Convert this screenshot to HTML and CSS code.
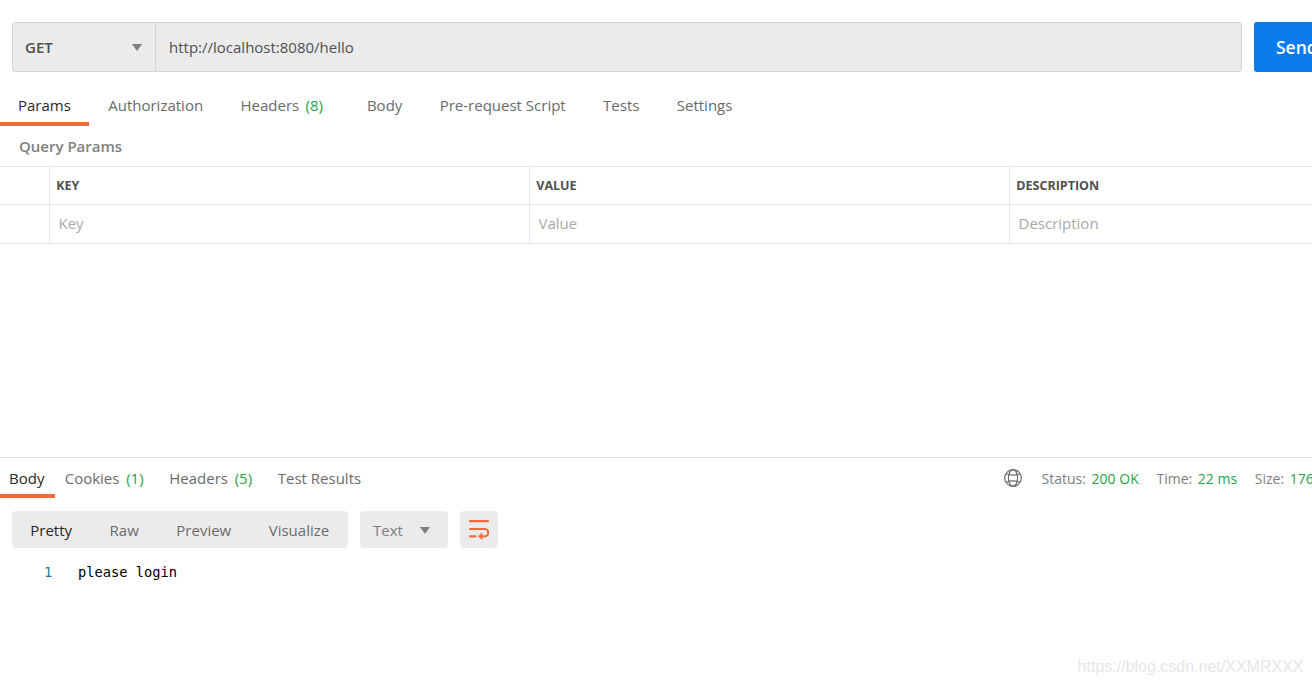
FILE: index.html
```html
<!DOCTYPE html>
<html>
	<head>
		<meta charset="utf-8">
		<title>Request</title>
		<link rel="stylesheet" href="styles.css">
	</head>
	<body>
		<div class="request">
			<div class="urlBar">
				<div class="method">GET <svg class="caret" width="10" height="7"><path d="M0 0h10L5 7z"/></svg></div>
				<div class="url">http://localhost:8080/hello</div>
			</div>
			<div class="send">Send</div>
		</div>
		<div class="tabs">
			<div class="tab active">Params</div>
			<div class="tab">Authorization</div>
			<div class="tab">Headers <span class="count">(8)</span></div>
			<div class="tab">Body</div>
			<div class="tab">Pre-request Script</div>
			<div class="tab">Tests</div>
			<div class="tab">Settings</div>
		</div>
		<div class="title">Query Params</div>
		<div class="params">
			<div class="cell head"></div>
			<div class="cell head">KEY</div>
			<div class="cell head">VALUE</div>
			<div class="cell head">DESCRIPTION</div>
			<div class="cell"></div>
			<div class="cell">Key</div>
			<div class="cell">Value</div>
			<div class="cell">Description</div>
		</div>
		<div class="response">
			<div class="responseBar">
				<div class="responseTabs">
					<div class="resTab active">Body</div>
					<div class="resTab">Cookies <span class="count">(1)</span></div>
					<div class="resTab">Headers <span class="count">(5)</span></div>
					<div class="resTab">Test Results</div>
				</div>
				<div class="meta">
					<svg class="globe" width="18" height="18" viewBox="0 0 18 18"><circle cx="9" cy="9" r="8.3"/><ellipse cx="9" cy="9" rx="4.6" ry="8.3"/><path d="M2 4.8Q9 7.6 16 4.8M2 13.2Q9 10.4 16 13.2"/></svg>
					<span class="stat">Status: <b>200 OK</b></span>
					<span class="stat">Time: <b>22 ms</b></span>
					<span class="stat">Size: <b>176 B</b></span>
				</div>
			</div>
			<div class="toolbar">
				<div class="views">
					<span class="view active">Pretty</span>
					<span class="view">Raw</span>
					<span class="view">Preview</span>
					<span class="view">Visualize</span>
				</div>
				<div class="format">Text <svg class="caret" width="10" height="7"><path d="M0 0h10L5 7z"/></svg></div>
				<div class="wrap">
					<svg width="20" height="20" viewBox="0 0 20 20"><path class="wrapLine" d="M1 1.2h18M1 9h14.6a3.6 3.6 0 0 1 0 7.3H12M1 16.3h5.4"/><path class="wrapArrow" d="M9 16.3l4.2-3.7v7.4z"/></svg>
				</div>
			</div>
			<div class="code"><span class="line">1</span><span>please login</span></div>
		</div>
		<div class="watermark">https://blog.csdn.net/XXMRXXX</div>
	</body>
</html>
```
FILE: styles.css
```css
*{ box-sizing: border-box; }
body{ margin: 0; padding-top: 22px; width: 1312px; height: 684px; overflow: hidden; display: flex; flex-direction: column; background: #fff; color: #6b6b6b; font: 15px/20px "Open Sans", sans-serif; white-space: nowrap; }
.request{ display: flex; height: 50px; flex: none; padding-left: 12px; }
.urlBar{ display: flex; flex: none; width: 1230px; background: #ebebeb; border: 1px solid #d4d4d4; border-radius: 3px; line-height: 48px; color: #505050; }
.method{ display: flex; align-items: center; justify-content: space-between; width: 143px; padding: 0 13px 0 12px; border-right: 1px solid #d4d4d4; font-size: 15px; font-weight: 600; }
.url{ padding-left: 13px; }
.caret{ fill: #808080; }
.send{ flex: none; width: 100px; margin-left: 12px; padding-left: 22px; background: #097bed; border-radius: 3px; color: #fff; font-size: 17.5px; font-weight: 600; line-height: 50px; }
.tabs{ display: flex; flex: none; height: 54px; }
.tab{ padding: 23px 18.7px 0 18.7px; }
.tab.active{ padding: 23px 18px 0 18px; margin-right: 0.7px; border-bottom: 4px solid #f26b3a; }
.active{ color: #282828; }
.count{ margin: 0 6.5px 0 2.5px; color: #26a248; }
.title{ flex: none; height: 40px; padding: 10px 0 0 19px; color: #808080; font-weight: 600; }
.params{ display: grid; flex: none; grid-template-columns: 50px 480px 480px 302px; grid-template-rows: 38px 39px; border-top: 1px solid #e6e6e6; }
.cell{ padding: 8px 0 0 8.5px; border-right: 1px solid #e6e6e6; border-bottom: 1px solid #e6e6e6; color: #a9a9a9; }
.cell:nth-child(4n){ border-right: 0; }
.cell.head{ padding: 9px 0 0 6.3px; color: #505050; font-size: 12.5px; font-weight: 700; }
.response{ flex: none; margin-top: 213px; border-top: 1px solid #dcdcdc; }
.responseBar{ display: flex; height: 40px; }
.responseTabs{ display: flex; flex: none; width: 1004px; }
.resTab{ padding: 10px 16px 0 9.7px; }
.resTab.active{ padding: 10px 10.6px 0 9px; border-bottom: 4px solid #f26b3a; }
.resTab .count{ margin: 0 0 0 2.8px; }
.meta{ display: flex; flex: none; padding-top: 11px; font-size: 14px; color: #808080; }
.globe{ width: 18px; margin-right: 19.6px; fill: none; stroke: #6b6b6b; stroke-width: 1.2; }
.stat{ margin-right: 17.7px; }
.stat b{ margin-left: 2px; color: #26a248; font-weight: 400; }
.toolbar{ display: flex; height: 37px; margin: 13px 0 0 12px; gap: 12px; line-height: 38px; }
.views, .format, .wrap{ display: flex; background: #ebebeb; border-radius: 4px; }
.views{ width: 336px; padding-left: 18.3px; gap: 37.5px; }
.format{ width: 88px; padding: 0 18px 0 13px; align-items: center; justify-content: space-between; color: #808080; }
.format .caret{ margin-top: 2px; }
.wrap{ width: 38px; align-items: center; justify-content: center; }
.wrapLine{ fill: none; stroke: #f26b3a; stroke-width: 2.2; stroke-linecap: round; }
.wrapArrow{ fill: #f26b3a; }
.code{ display: flex; margin-top: 14px; color: #000; font: 13.7px/20px "DejaVu Sans Mono", monospace; }
.line{ width: 78px; padding-left: 44px; color: #237893; }
.watermark{ margin: auto 8.5px 8px auto; color: #e6e6e6; font: 16px/18px "Liberation Sans", sans-serif; }
```
